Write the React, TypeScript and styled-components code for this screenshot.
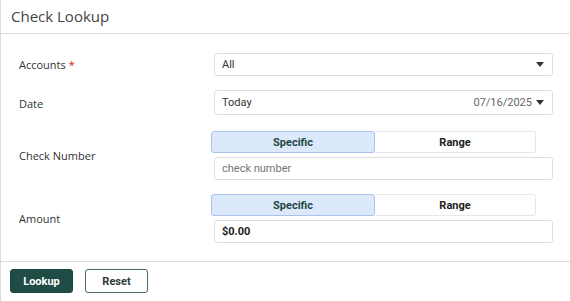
import { createGlobalStyle } from "styled-components"
import styled from "styled-components"

const GlobalStyle = createGlobalStyle`
    html, body {
        margin    : 0;
        padding   : 0;
        background: #fff;
    }
    body {
        width      : 570px;
        height     : 301px;
        overflow   : hidden;
        font-family: "Open Sans", "Noto Sans", sans-serif;
    }
`

const Panel = styled.div`
    box-sizing    : border-box;
    width         : 570px;
    height        : 301px;
    border-left   : 1px solid #dcdcdc;
    display       : flex;
    flex-direction: column;
`

const Header = styled.div`
    height       : 33px;
    border-bottom: 1px solid #dcdcdc;
    display      : flex;
    align-items  : center;
    padding-left : 10px;
`

const Title = styled.h1`
    margin     : 0 0 2px;
    font-size  : 15px;
    font-weight: 400;
    color      : #454545;
`

const Body = styled.div`
    padding              : 19px 17px 18px 18px;
    border-bottom        : 1px solid #dcdcdc;
    display              : grid;
    grid-template-columns: 192px 1fr;
    align-items          : center;
    row-gap              : 14px;
`

const Label = styled.div`
    font-size: 11px;
    color    : #333;
`

const Required = styled.span`
    color      : #d42020;
    margin-left: 3px;
`

const Stack = styled.div`
    display       : flex;
    flex-direction: column;
    gap           : 4px;
`

const Field = styled.div<{ $h: number, $mb?: number }>`
    box-sizing     : border-box;
    height         : ${p => p.$h}px;
    margin         : 0 0 ${p => p.$mb ?? 0}px 3px;
    border         : 1px solid #dedede;
    border-radius  : 3px;
    display        : flex;
    align-items    : center;
    padding        : 0 7px;
    font-family    : Roboto, "Liberation Sans", sans-serif;
    font-size      : 11px;
    color          : #333;
`

const Grow = styled.span`
    flex: 1;
`

const Muted = styled.span`
    color: #666;
`

const Placeholder = styled.span`
    color: #757575;
`

const Value = styled.span`
    font-weight: 700;
    color      : #222;
`

const Caret = styled.span`
    width       : 0;
    height      : 0;
    margin-left : 4px;
    margin-right: 1px;
    border-left : 4.5px solid transparent;
    border-right: 4.5px solid transparent;
    border-top  : 5px solid #333;
`

const Toggle = styled.div`
    display: flex;
    width  : 325px;
    height : 22px;
`

const Segment = styled.button<{ $active?: boolean }>`
    box-sizing   : border-box;
    flex         : 0 0 ${p => p.$active ? 164 : 161}px;
    height       : 100%;
    padding      : 0;
    border       : 1px solid ${p => p.$active ? '#a8c4ec' : '#e6e6ec'};
    border-left  : ${p => p.$active ? '1px solid #a8c4ec' : 'none'};
    border-radius: ${p => p.$active ? '3px' : '0 3px 3px 0'};
    background   : ${p => p.$active ? '#dce9fa' : '#fff'};
    color        : ${p => p.$active ? '#1e4840' : '#222'};
    font-family  : Roboto, "Liberation Sans", sans-serif;
    font-size    : 11px;
    font-weight  : 700;
`

const Footer = styled.div`
    display    : flex;
    gap        : 12px;
    padding    : 7px 9px;
`

const Button = styled.button<{ $primary?: boolean }>`
    box-sizing   : border-box;
    width        : 63px;
    height       : 24px;
    border-radius: 3px;
    border       : 1px solid ${p => p.$primary ? '#1c4a42' : '#4a6b64'};
    background   : ${p => p.$primary ? '#1f4d45' : '#fff'};
    color        : ${p => p.$primary ? '#fff' : '#2a3b38'};
    font-family  : Roboto, "Liberation Sans", sans-serif;
    font-size    : 11px;
    font-weight  : 700;
`

const ModeToggle = () => (
    <Toggle>
        <Segment $active>Specific</Segment>
        <Segment>Range</Segment>
    </Toggle>
)

export default function App() {
    return (
        <>
            <GlobalStyle />
            <Panel>
                <Header>
                    <Title>Check Lookup</Title>
                </Header>
                <Body>
                    <Label>Accounts<Required>*</Required></Label>
                    <Field $h={23}>
                        <Grow>All</Grow>
                        <Caret />
                    </Field>

                    <Label>Date</Label>
                    <Field $h={25} $mb={2}>
                        <Grow>Today</Grow>
                        <Muted>07/16/2025</Muted>
                        <Caret />
                    </Field>

                    <Label>Check Number</Label>
                    <Stack>
                        <ModeToggle />
                        <Field $h={23}>
                            <Placeholder>check number</Placeholder>
                        </Field>
                    </Stack>

                    <Label>Amount</Label>
                    <Stack>
                        <ModeToggle />
                        <Field $h={23}>
                            <Value>$0.00</Value>
                        </Field>
                    </Stack>
                </Body>
                <Footer>
                    <Button $primary>Lookup</Button>
                    <Button>Reset</Button>
                </Footer>
            </Panel>
        </>
    )
}
